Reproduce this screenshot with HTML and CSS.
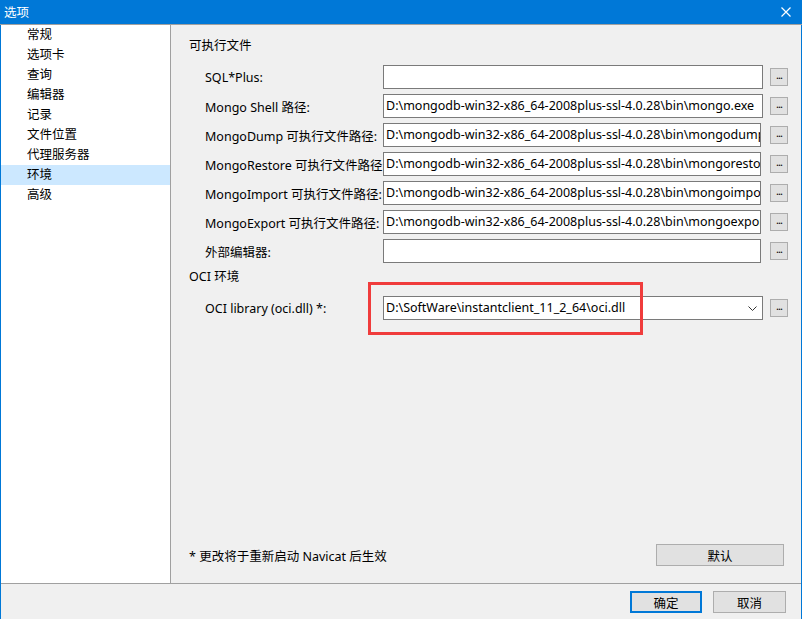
FILE: index.html
```html
<!DOCTYPE html>
<html lang="zh-CN">
<head>
    <meta charset="UTF-8">
    <title>选项</title>
    <link rel="stylesheet" href="styles.css">
</head>
<body>
    <div class="window">
        <div class="titlebar">
            <span class="title">选项</span>
            <svg class="close" width="10" height="10" viewBox="0 0 10 10">
                <path d="M0.5 0.5 L9.5 9.5 M9.5 0.5 L0.5 9.5" stroke="#fff" stroke-width="1.2" fill="none"/>
            </svg>
        </div>

        <div class="main">
            <ul class="sidebar">
                <li>常规</li>
                <li>选项卡</li>
                <li>查询</li>
                <li>编辑器</li>
                <li>记录</li>
                <li>文件位置</li>
                <li>代理服务器</li>
                <li class="active">环境</li>
                <li>高级</li>
            </ul>

            <div class="pane">
                <div class="section-title">可执行文件</div>
                <div class="fields">
                    <span class="label">SQL*Plus:</span>
                    <div class="input wide"></div>
                    <button class="dots">...</button>

                    <span class="label">Mongo Shell 路径:</span>
                    <div class="input wide">D:\mongodb-win32-x86_64-2008plus-ssl-4.0.28\bin\mongo.exe</div>
                    <button class="dots">...</button>

                    <span class="label">MongoDump 可执行文件路径:</span>
                    <div class="input">D:\mongodb-win32-x86_64-2008plus-ssl-4.0.28\bin\mongodump.exe</div>
                    <button class="dots">...</button>

                    <span class="label">MongoRestore 可执行文件路径:</span>
                    <div class="input">D:\mongodb-win32-x86_64-2008plus-ssl-4.0.28\bin\mongorestore.exe</div>
                    <button class="dots">...</button>

                    <span class="label">MongoImport 可执行文件路径:</span>
                    <div class="input">D:\mongodb-win32-x86_64-2008plus-ssl-4.0.28\bin\mongoimport.exe</div>
                    <button class="dots">...</button>

                    <span class="label">MongoExport 可执行文件路径:</span>
                    <div class="input">D:\mongodb-win32-x86_64-2008plus-ssl-4.0.28\bin\mongoexport.exe</div>
                    <button class="dots">...</button>

                    <span class="label">外部编辑器:</span>
                    <div class="input"></div>
                    <button class="dots">...</button>
                </div>

                <div class="section-title oci-title">OCI 环境</div>
                <div class="fields oci">
                    <span class="label">OCI library (oci.dll) *:</span>
                    <div class="input wide combo">
                        <span>D:\SoftWare\instantclient_11_2_64\oci.dll</span>
                        <svg class="chevron" width="9" height="5" viewBox="0 0 9 5">
                            <path d="M0.5 0.5 L4.5 4.5 L8.5 0.5" stroke="#333" stroke-width="1" fill="none"/>
                        </svg>
                    </div>
                    <button class="dots">...</button>
                    <div class="highlight"></div>
                </div>

                <div class="pane-footer">
                    <span class="note">* 更改将于重新启动 Navicat 后生效</span>
                    <button class="btn default-btn">默认</button>
                </div>
            </div>
        </div>

        <div class="footer">
            <button class="btn primary">确定</button>
            <button class="btn">取消</button>
        </div>
    </div>
</body>
</html>
```

FILE: styles.css
```css
* {
    margin: 0;
    padding: 0;
    box-sizing: border-box;
}

body {
    font-family: "Noto Sans", "Noto Sans CJK SC", sans-serif;
    font-size: 12.5px;
    color: #000;
    background: #fff;
}

.window {
    width: 802px;
    height: 619px;
    border-left: 1px solid #0078d7;
    border-right: 1px solid #0078d7;
    background: #f0f0f0;
    display: flex;
    flex-direction: column;
}

.titlebar {
    height: 25px;
    background: #0078d7;
    border-bottom: 1px solid #a0a0a0;
    margin: 0 -1px;
    display: flex;
    align-items: center;
    justify-content: space-between;
    padding: 0 11px 1px 4px;
    color: #fff;
}

.main {
    height: 559px;
    display: flex;
    border-bottom: 1px solid #a0a0a0;
}

.sidebar {
    flex: none;
    list-style: none;
    width: 170px;
    background: #fff;
    border-right: 1px solid #a0a0a0;
}

.sidebar li {
    height: 20px;
    line-height: 20px;
    padding-left: 26px;
}

.sidebar li.active {
    background: #cce8ff;
}

.pane {
    flex: 1;
    min-width: 0;
    display: flex;
    flex-direction: column;
    padding: 13px 17px 17px 18px;
}

.section-title {
    line-height: 16px;
    margin-bottom: 11px;
}

.oci-title {
    margin-top: 6px;
}

.fields {
    display: grid;
    grid-template-columns: 171px 380px 18px;
    grid-auto-rows: 24px;
    column-gap: 7px;
    row-gap: 5px;
    padding-left: 16px;
    align-items: center;
}

.label {
    white-space: nowrap;
}

.input {
    height: 24px;
    width: 378px;
    background: #fff;
    border: 1px solid #7a7a7a;
    padding: 0 2px;
    line-height: 22px;
    white-space: nowrap;
    overflow: hidden;
}

.input.wide {
    width: 380px;
}

.combo {
    display: flex;
    align-items: center;
    justify-content: space-between;
    padding-right: 5px;
}

.dots {
    width: 18px;
    height: 18px;
    background: #e1e1e1;
    border: 1px solid #adadad;
    font-family: inherit;
    font-size: 11px;
    line-height: 10px;
    letter-spacing: -1px;
    padding-bottom: 4px;
}

.oci {
    position: relative;
}

.highlight {
    position: absolute;
    left: 179px;
    top: -14px;
    width: 275px;
    height: 53px;
    border: 3px solid #f03c3c;
}

.pane-footer {
    margin-top: auto;
    display: flex;
    align-items: center;
    justify-content: space-between;
}

.btn {
    height: 22px;
    background: #e1e1e1;
    border: 1px solid #adadad;
    font-family: inherit;
    font-size: 12.5px;
    color: #000;
}

.default-btn {
    width: 128px;
}

.footer {
    display: flex;
    justify-content: flex-end;
    gap: 11px;
    padding: 7px 15px 0 0;
}

.footer .btn {
    width: 73px;
}

.footer .primary {
    width: 72px;
    border: 2px solid #0078d7;
}
```
